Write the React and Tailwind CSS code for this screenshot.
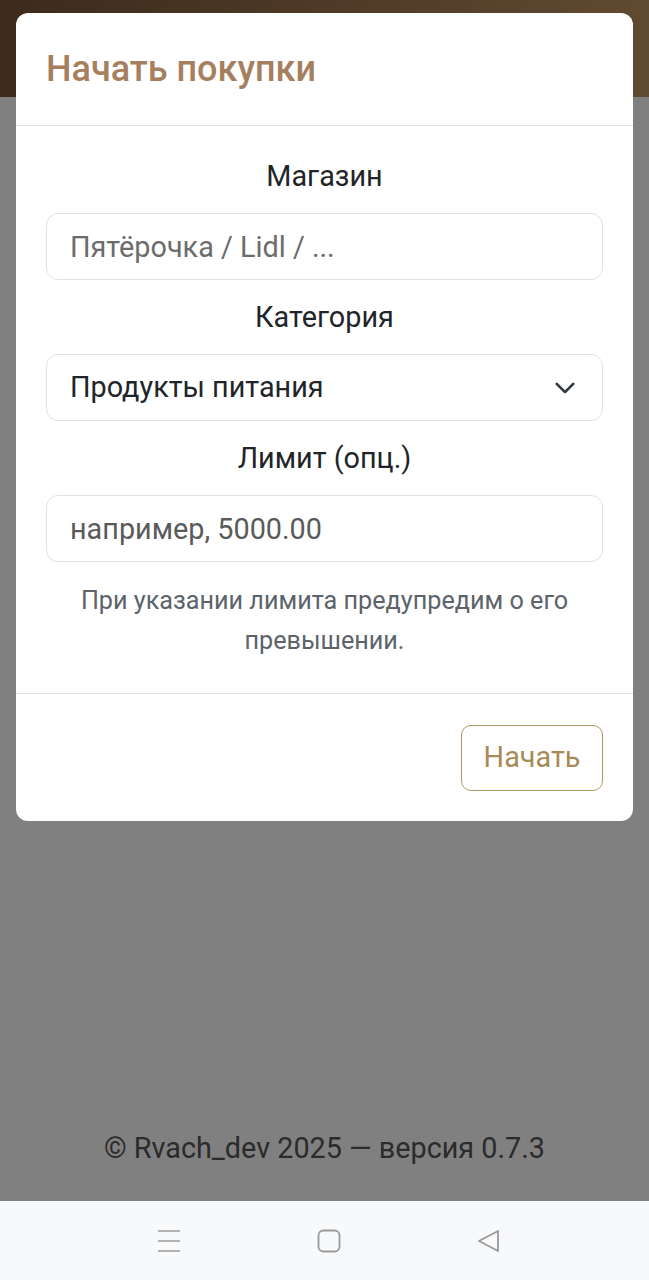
import React from 'react';

const font = { fontFamily: 'Roboto, "Noto Sans", sans-serif' };

const Field = ({ label, children }) => (
  <div className="flex flex-col">
    <label className="text-center text-[28.8px] leading-[36px] text-[#212529] mb-[19px]">{label}</label>
    {children}
  </div>
);

const App = () => {
  return (
    <div className="relative flex flex-col min-h-[1280px] w-full" style={font}>
      <div className="h-[97px] bg-gradient-to-r from-[#3c2a1c] to-[#604a31]" />

      <main className="flex-1 bg-[#808080] flex flex-col justify-end items-center pb-[35px]">
        <p className="text-[28.8px] leading-[36px] text-[#2b2b2b]">© Rvach_dev 2025 — версия 0.7.3</p>
      </main>

      <nav className="h-[79px] bg-[#f8f9fb] flex justify-center items-center pl-[9px]">
        <div className="w-[160px] flex justify-center">
          <svg width="24" height="24" viewBox="0 0 24 24" fill="none" stroke="#9a9a9a" strokeWidth="1.6">
            <path d="M1 2h22M1 12h22M1 22h22" />
          </svg>
        </div>
        <div className="w-[160px] flex justify-center">
          <svg width="24" height="24" viewBox="0 0 24 24" fill="none" stroke="#9a9a9a" strokeWidth="1.8">
            <rect x="1.5" y="1.5" width="21" height="21" rx="5" />
          </svg>
        </div>
        <div className="w-[160px] flex justify-center">
          <svg width="24" height="24" viewBox="0 0 24 24" fill="none" stroke="#9a9a9a" strokeWidth="1.8" strokeLinejoin="round">
            <path d="M21 2L2 12l19 10z" />
          </svg>
        </div>
      </nav>

      <div className="absolute top-[13px] left-[16px] right-[16px] bg-white rounded-[12px] flex flex-col">
        <div className="px-[30px] py-[38px] border-b border-[#dee2e6]">
          <h2 className="text-[36px] leading-[36px] font-medium text-[#a67f5f]">Начать покупки</h2>
        </div>

        <div className="px-[30px] pt-[32px] pb-[32px] flex flex-col gap-[19px] border-b border-[#dee2e6]">
          <Field label="Магазин">
            <input
              type="text"
              placeholder="Пятёрочка / Lidl / ..."
              className="h-[67px] w-full border border-[#dee2e6] rounded-[12px] px-[23px] text-[28.8px] text-[#212529] placeholder-[#6c6c6c] outline-none"
            />
          </Field>
          <Field label="Категория">
            <div className="h-[67px] w-full border border-[#dee2e6] rounded-[12px] pl-[23px] pr-[26px] flex items-center justify-between">
              <span className="text-[28.8px] text-[#212529]">Продукты питания</span>
              <svg width="22" height="22" viewBox="0 0 16 16" fill="none" stroke="#343a40" strokeWidth="2" strokeLinecap="round" strokeLinejoin="round">
                <path d="M2 5l6 6 6-6" />
              </svg>
            </div>
          </Field>
          <Field label="Лимит (опц.)">
            <input
              type="text"
              placeholder="например, 5000.00"
              className="h-[67px] w-full border border-[#dee2e6] rounded-[12px] px-[23px] text-[28.8px] text-[#212529] placeholder-[#5a5a5a] outline-none"
            />
          </Field>
          <p className="text-center text-[25.2px] leading-[40px] text-[#5c636a] px-[24px]">
            При указании лимита предупредим о его превышении.
          </p>
        </div>

        <div className="px-[30px] pt-[31px] pb-[30px] flex justify-end">
          <button className="h-[66px] w-[142px] border-[1.5px] border-[#b39a64] rounded-[10px] text-[28.8px] text-[#a88a57]">
            Начать
          </button>
        </div>
      </div>
    </div>
  );
};

export default App;
